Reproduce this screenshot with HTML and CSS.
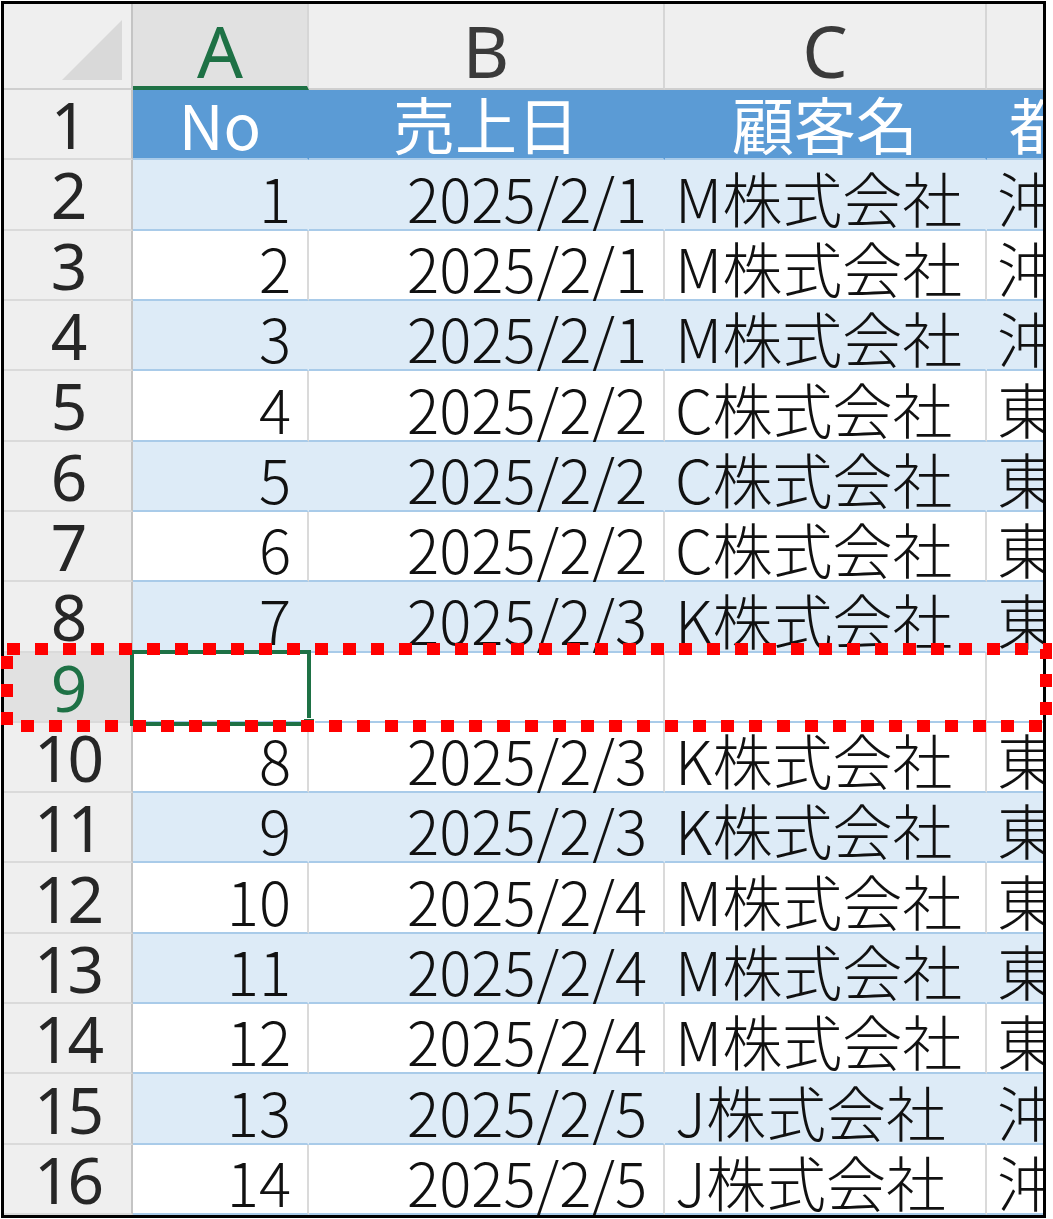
FILE: index.html
```html
<!DOCTYPE html>
<html lang="ja">
<head>
<meta charset="utf-8">
<title>Excel</title>
<link rel="stylesheet" href="styles.css">
</head>
<body>
<div class="frame">
  <div class="sheet">
    <div class="ch corner"><svg class="tri" width="60" height="60" viewBox="0 0 60 60"><polygon points="60,0 60,60 0,60" fill="#d9d9d9"/></svg></div>
    <div class="ch sel-col">A</div>
    <div class="ch">B</div>
    <div class="ch">C</div>
    <div class="ch">D</div>

    <div class="rh">1</div>
    <div class="c hd">No</div>
    <div class="c hd">売上日</div>
    <div class="c hd">顧客名</div>
    <div class="c hd">都道府県</div>

    <div class="rh">2</div>
    <div class="c band num">1</div><div class="c band num">2025/2/1</div><div class="c band txt">M株式会社</div><div class="c band txt">沖縄県</div>
    <div class="rh">3</div>
    <div class="c num">2</div><div class="c num">2025/2/1</div><div class="c txt">M株式会社</div><div class="c txt">沖縄県</div>
    <div class="rh">4</div>
    <div class="c band num">3</div><div class="c band num">2025/2/1</div><div class="c band txt">M株式会社</div><div class="c band txt">沖縄県</div>
    <div class="rh">5</div>
    <div class="c num">4</div><div class="c num">2025/2/2</div><div class="c txt">C株式会社</div><div class="c txt">東京都</div>
    <div class="rh">6</div>
    <div class="c band num">5</div><div class="c band num">2025/2/2</div><div class="c band txt">C株式会社</div><div class="c band txt">東京都</div>
    <div class="rh">7</div>
    <div class="c num">6</div><div class="c num">2025/2/2</div><div class="c txt">C株式会社</div><div class="c txt">東京都</div>
    <div class="rh">8</div>
    <div class="c band num">7</div><div class="c band num">2025/2/3</div><div class="c band txt">K株式会社</div><div class="c band txt">東京都</div>
    <div class="rh sel-row">9</div>
    <div class="c active"></div><div class="c"></div><div class="c"></div><div class="c"></div>
    <div class="rh">10</div>
    <div class="c num">8</div><div class="c num">2025/2/3</div><div class="c txt">K株式会社</div><div class="c txt">東京都</div>
    <div class="rh">11</div>
    <div class="c band num">9</div><div class="c band num">2025/2/3</div><div class="c band txt">K株式会社</div><div class="c band txt">東京都</div>
    <div class="rh">12</div>
    <div class="c num">10</div><div class="c num">2025/2/4</div><div class="c txt">M株式会社</div><div class="c txt">東京都</div>
    <div class="rh">13</div>
    <div class="c band num">11</div><div class="c band num">2025/2/4</div><div class="c band txt">M株式会社</div><div class="c band txt">東京都</div>
    <div class="rh">14</div>
    <div class="c num">12</div><div class="c num">2025/2/4</div><div class="c txt">M株式会社</div><div class="c txt">東京都</div>
    <div class="rh">15</div>
    <div class="c band num">13</div><div class="c band num">2025/2/5</div><div class="c band txt">J株式会社</div><div class="c band txt">沖縄県</div>
    <div class="rh">16</div>
    <div class="c num">14</div><div class="c num">2025/2/5</div><div class="c txt">J株式会社</div><div class="c txt">沖縄県</div>
  </div>
</div>
<svg class="marquee" width="1053" height="1219" viewBox="0 0 1053 1219">
  <rect x="7" y="649" width="1039" height="77" fill="none" stroke="#ff0000" stroke-width="12" stroke-dasharray="13 15"/>
</svg>
</body>
</html>
```

FILE: styles.css
```css
html, body {
  margin: 0;
  padding: 0;
  background: #ffffff;
}

body {
  width: 1053px;
  height: 1219px;
  position: relative;
  overflow: hidden;
}

.frame {
  box-sizing: border-box;
  margin: 1px 0 0 1px;
  width: 1045px;
  height: 1217px;
  border: 3px solid #000000;
  overflow: hidden;
  background: #ffffff;
}

.sheet {
  display: grid;
  grid-template-columns: 129px 176px 356px 322px 294px;
  grid-template-rows: 86px repeat(16, 1fr);
  width: 1277px;
  height: 100%;
}

/* column headers */
.ch {
  box-sizing: border-box;
  background: #efefef;
  border-right: 2px solid #d6d6d6;
  border-bottom: 2px solid #cfcfcf;
  display: flex;
  align-items: flex-end;
  justify-content: center;
  font-family: "Noto Sans", "Liberation Sans", sans-serif;
  font-size: 72px;
  line-height: 1;
  color: #3a3a3a;
  padding-bottom: 2px;
}

.corner {
  border-right: 2px solid #c4c4c4;
  align-items: flex-start;
  justify-content: flex-end;
  padding: 16px 9px 0 0;
}

.tri {
  display: block;
}

.sel-col {
  background: #e1e1e1;
  color: #1e7145;
  border-bottom: 4px solid #1e7145;
  padding-bottom: 0;
}

/* row headers */
.rh {
  box-sizing: border-box;
  background: #efefef;
  border-right: 2px solid #c4c4c4;
  border-bottom: 2px solid #dadada;
  display: flex;
  align-items: center;
  justify-content: center;
  font-family: "Noto Sans", "Liberation Sans", sans-serif;
  font-size: 64px;
  letter-spacing: -3px;
  line-height: 1;
  color: #262626;
  padding-top: 2px;
}

.sel-row {
  background: #e1e1e1;
  color: #1e7145;
}

/* data cells */
.c {
  box-sizing: border-box;
  display: flex;
  align-items: flex-end;
  white-space: nowrap;
  background: #ffffff;
  border-right: 2px solid #dadada;
  border-bottom: 2px solid #a9cbe9;
  font-family: "Noto Sans CJK JP", "Noto Sans", sans-serif;
  font-weight: 300;
  font-size: 60px;
  line-height: 1;
  color: #111111;
  padding: 0 14px 2px 10px;
}

.band {
  background: #ddebf7;
  border-right-color: #ddebf7;
}

.num {
  justify-content: flex-end;
  padding-right: 16px;
}

.txt {
  justify-content: flex-start;
  font-size: 60px;
}

.hd {
  background: #5b9bd5;
  border-right-color: #5b9bd5;
  color: #ffffff;
  justify-content: center;
  font-size: 62px;
  font-weight: 400;
  padding: 0 0 4px 0;
}

.active {
  position: relative;
}

.active::after {
  content: "";
  position: absolute;
  left: -3px;
  top: -3px;
  right: -4px;
  bottom: -5px;
  border: 4px solid #1e7145;
  z-index: 2;
}

.active::before {
  content: "";
  position: absolute;
  right: -8px;
  bottom: -9px;
  width: 10px;
  height: 10px;
  background: #1e7145;
  border: 1px solid #ffffff;
  z-index: 3;
}

.marquee {
  position: absolute;
  left: 0;
  top: 0;
  pointer-events: none;
  z-index: 5;
}
```
